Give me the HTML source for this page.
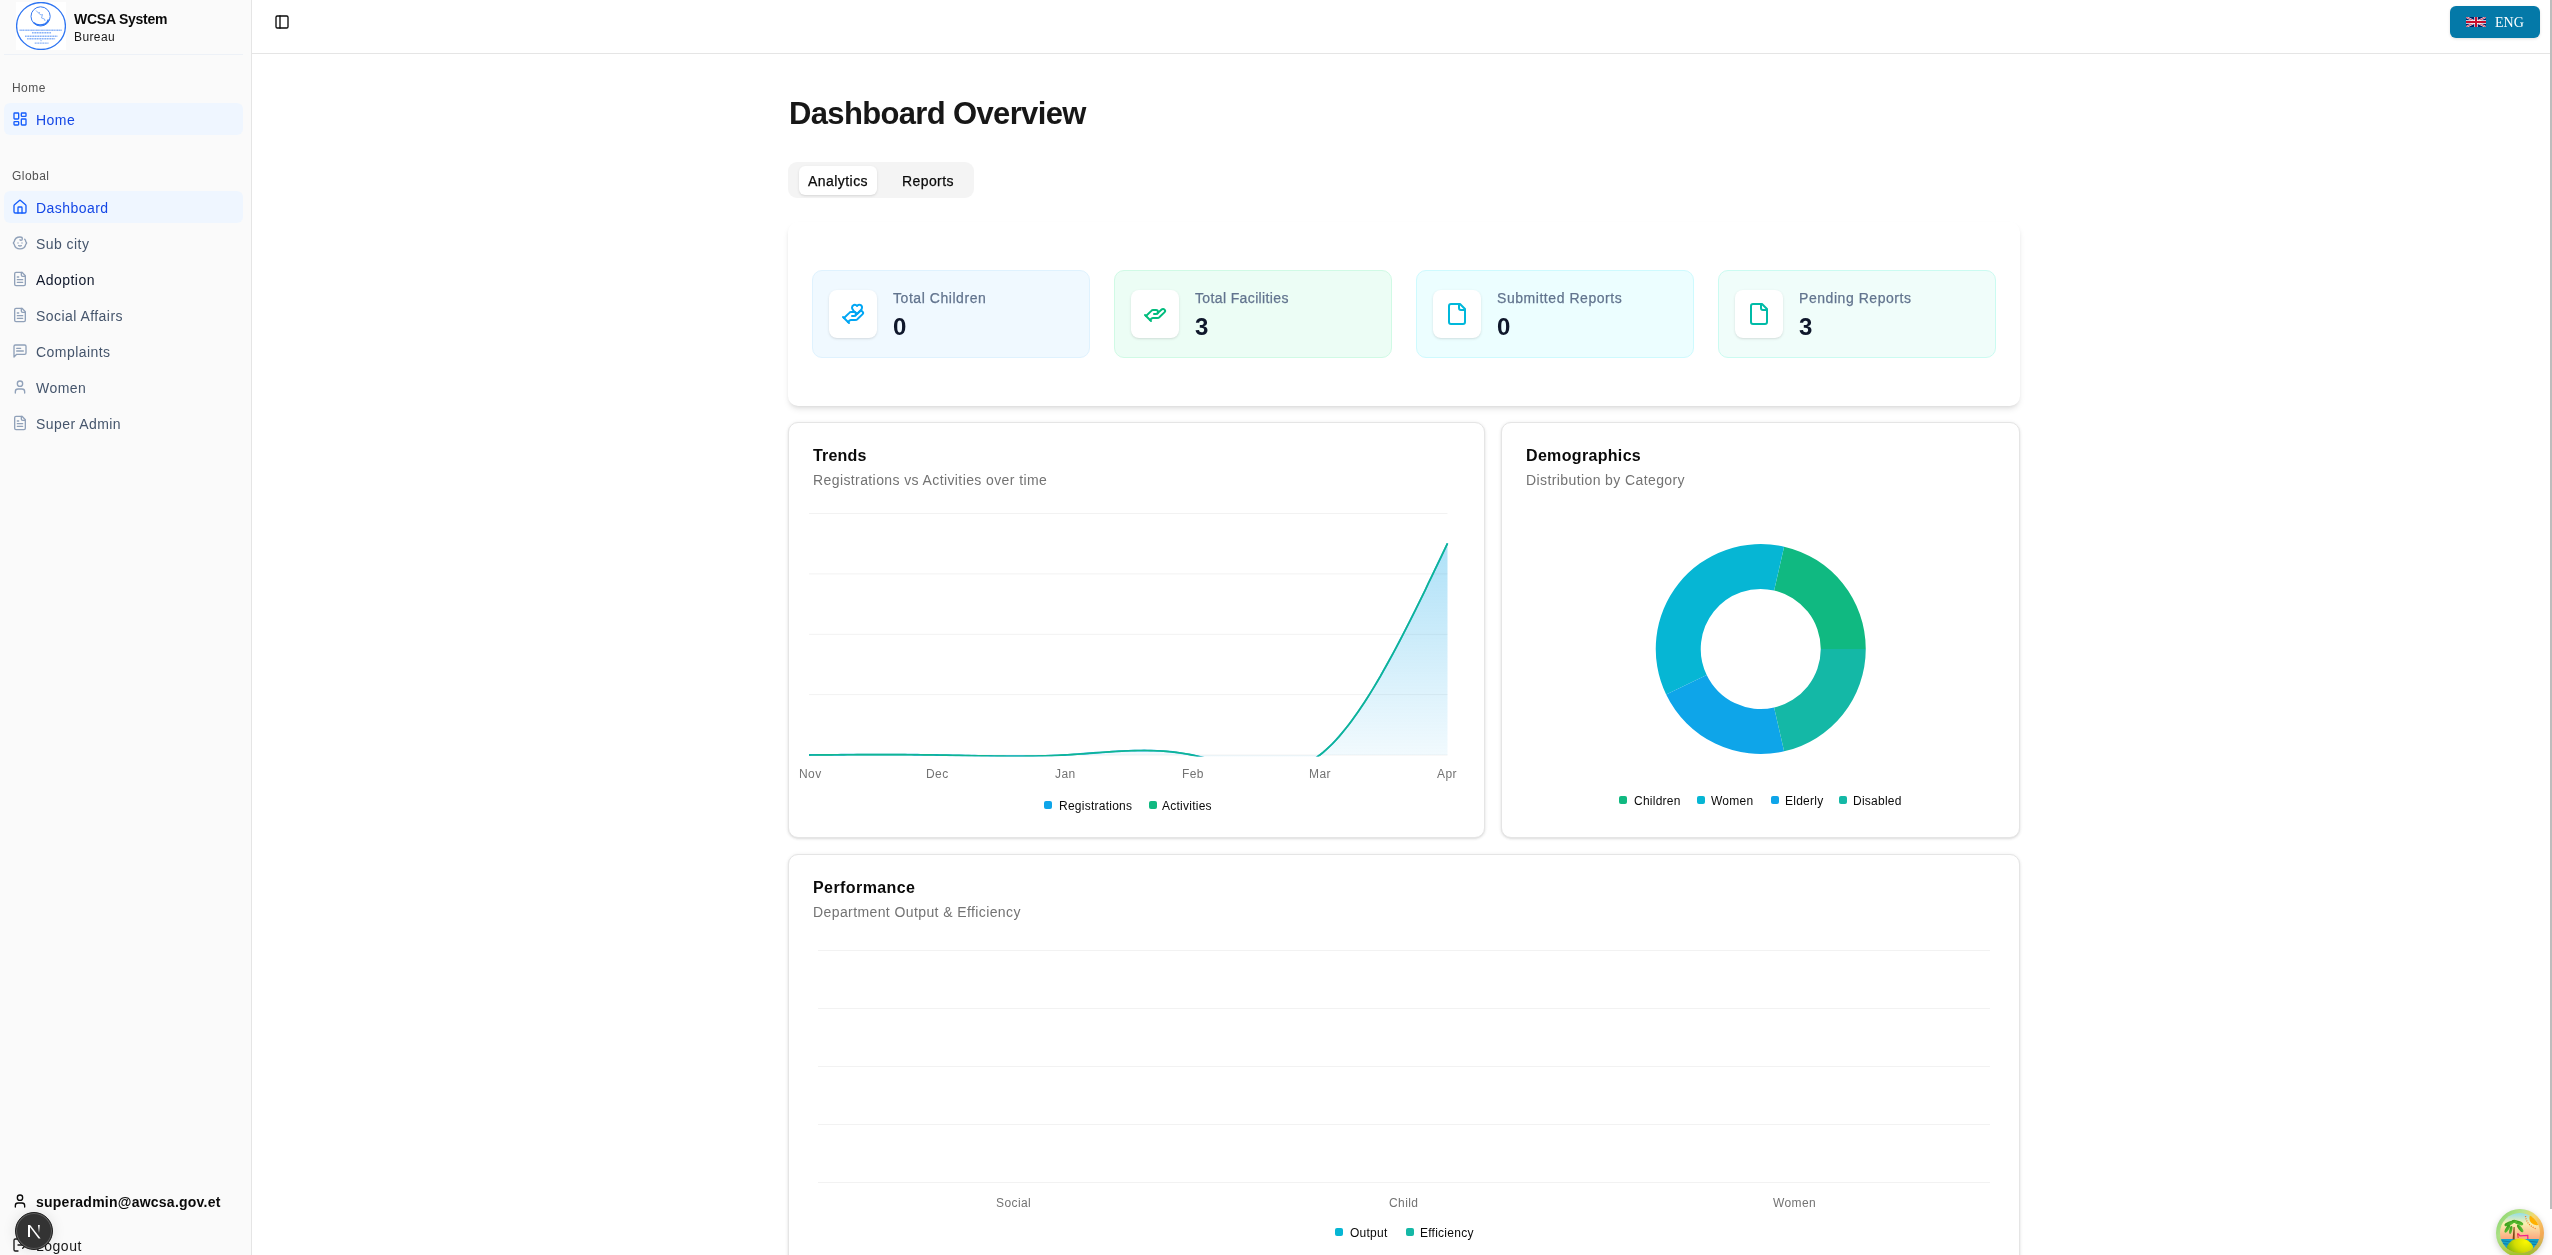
<!DOCTYPE html>
<html><head><meta charset="utf-8">
<style>
*{box-sizing:border-box;margin:0;padding:0}
html,body{width:2552px;height:1255px;overflow:hidden;background:#fff;font-family:"Liberation Sans",sans-serif;color:#0a0a0a}
.abs{position:absolute}
.t,.lbl,.grp,.ctitle,.csub,.leg,.ax,.lb,.val{will-change:transform}
.t{position:absolute;white-space:nowrap;line-height:1}
#sidebar{position:absolute;left:0;top:0;width:252px;height:1255px;background:#fafafa;border-right:1px solid #e5e5e5}
#header{position:absolute;left:252px;top:0;width:2300px;height:54px;border-bottom:1px solid #e5e5e5;background:#fff}
.nav{position:absolute;left:4px;width:239px;height:32px;border-radius:6px}
.nav.active{background:#eff6ff}
.nav svg{position:absolute;left:8px;top:8px;width:16px;height:16px;fill:none;stroke:#90a1b9;stroke-width:2;stroke-linecap:round;stroke-linejoin:round}
.nav.active svg{stroke:#155dfc}
.nav .lbl{position:absolute;left:32px;top:1px;line-height:32px;font-size:14px;letter-spacing:.45px;color:#45556c;white-space:nowrap}
.nav.active .lbl{color:#1447e6}
.grp{position:absolute;left:12px;font-size:12px;letter-spacing:.45px;color:#525252;line-height:12px;white-space:nowrap}
.card{position:absolute;background:#fff;border:1px solid #e5e5e5;border-radius:10px;box-shadow:0 1px 3px 0 rgba(0,0,0,.1),0 1px 2px -1px rgba(0,0,0,.1),0 0 5px rgba(0,0,0,.035)}
.stat{position:absolute;top:270px;width:278px;height:88px;border-radius:10px;border:1px solid}
.stat .ib{position:absolute;left:16px;top:19px;width:48px;height:48px;border-radius:8px;background:#fff;box-shadow:0 1px 3px rgba(0,0,0,.1),0 1px 2px -1px rgba(0,0,0,.1)}
.stat .ib svg{position:absolute;left:12px;top:12px;width:24px;height:24px;fill:none;stroke-width:2;stroke-linecap:round;stroke-linejoin:round}
.stat .lb{position:absolute;left:80px;top:20px;font-size:14px;line-height:14px;letter-spacing:.55px;-webkit-text-stroke:.25px currentColor;color:#62748e;white-space:nowrap}
.stat .val{position:absolute;left:80px;top:44px;font-size:24px;line-height:24px;font-weight:bold;color:#0f172b}
.ctitle{position:absolute;font-size:16px;font-weight:bold;line-height:16px;margin-top:1px;letter-spacing:.2px;color:#0a0a0a;white-space:nowrap}
.csub{position:absolute;font-size:14px;line-height:14px;letter-spacing:.4px;color:#737373;white-space:nowrap}
.leg{position:absolute;font-size:12px;line-height:12px;letter-spacing:.25px;color:#0a0a0a;white-space:nowrap}
.sq{position:absolute;width:8px;height:8px;border-radius:2px}
.ax{position:absolute;font-size:12px;line-height:12px;letter-spacing:.4px;color:#737373;white-space:nowrap}
</style></head>
<body>
<!-- SIDEBAR -->
<div id="sidebar">
  <!-- logo -->
  <div class="abs" style="left:16px;top:2px;width:50px;height:48px;background:#fff">
    <svg width="50" height="48" viewBox="0 0 50 48" style="position:absolute;left:0;top:0">
      <ellipse cx="25" cy="24" rx="24.4" ry="23.5" fill="none" stroke="#2d74f2" stroke-width="1.3"/>
      <circle cx="24.6" cy="14.4" r="9.6" fill="none" stroke="#3579f2" stroke-width="1"/>
      <path d="M17.5 20.5 Q22 24.5 29 22 Q31.5 20.5 32.5 17.5" fill="none" stroke="#2d74f2" stroke-width="1.5"/>
      <path d="M20 8.5 L22.5 11 L24 10.5 M22.5 11 L25 13 L26.5 12.5 L25.5 16 L28.5 17 L29 19" fill="none" stroke="#6fa2f6" stroke-width=".8"/>
      <g stroke="#5a94f5" stroke-dasharray="1.3 .35 .9 .3 1.6 .5" opacity=".7">
        <line x1="3.5" y1="28.35" x2="46" y2="28.35" stroke-width="1.5"/>
        <line x1="16" y1="30.8" x2="35" y2="30.8" stroke-width="1.4"/>
        <line x1="9" y1="34.2" x2="41.7" y2="34.2" stroke-width="1.4"/>
        <line x1="11.1" y1="36.7" x2="39.1" y2="36.7" stroke-width="1.4"/>
        <line x1="24.4" y1="38.7" x2="26" y2="38.7" stroke-width="1"/>
        <line x1="18.7" y1="41.1" x2="32.5" y2="41.1" stroke-width="1.4"/>
      </g>
    </svg>
  </div>
  <div class="t" style="left:74px;top:12px;font-size:14px;font-weight:bold;color:#0a0a0a;letter-spacing:-.25px">WCSA System</div>
  <div class="t" style="left:74px;top:31px;font-size:12px;color:#171717;letter-spacing:.4px">Bureau</div>
  <div class="abs" style="left:4px;top:54px;width:239px;height:1px;background:#edf1f7"></div>

  <div class="grp" style="top:82px">Home</div>
  <div class="nav active" style="top:103px">
    <svg viewBox="0 0 24 24"><rect width="7" height="9" x="3" y="3" rx="1"/><rect width="7" height="5" x="14" y="3" rx="1"/><rect width="7" height="9" x="14" y="12" rx="1"/><rect width="7" height="5" x="3" y="16" rx="1"/></svg>
    <div class="lbl">Home</div>
  </div>

  <div class="grp" style="top:170px">Global</div>
  <div class="nav active" style="top:191px">
    <svg viewBox="0 0 24 24"><path d="M15 21v-8a1 1 0 0 0-1-1h-4a1 1 0 0 0-1 1v8"/><path d="M3 10a2 2 0 0 1 .709-1.528l7-5.999a2 2 0 0 1 2.582 0l7 5.999A2 2 0 0 1 21 10v9a2 2 0 0 1-2 2H5a2 2 0 0 1-2-2z"/></svg>
    <div class="lbl">Dashboard</div>
  </div>
  <div class="nav" style="top:227px">
    <svg viewBox="0 0 24 24"><path d="M9 12h.01"/><path d="M15 12h.01"/><path d="M10 16c.5.3 1.2.5 2 .5s1.5-.2 2-.5"/><path d="M19 6.3a9 9 0 0 1 1.8 3.9 2 2 0 0 1 0 3.6 9 9 0 0 1-17.6 0 2 2 0 0 1 0-3.6A9 9 0 0 1 12 3c2 0 3.5 1.1 3.5 2.5s-.9 2.5-2 2.5c-.8 0-1.5-.4-1.5-1"/></svg>
    <div class="lbl">Sub city</div>
  </div>
  <div class="nav" style="top:263px">
    <svg viewBox="0 0 24 24"><path d="M15 2H6a2 2 0 0 0-2 2v16a2 2 0 0 0 2 2h12a2 2 0 0 0 2-2V7Z"/><path d="M14 2v4a2 2 0 0 0 2 2h4"/><path d="M10 9H8"/><path d="M16 13H8"/><path d="M16 17H8"/></svg>
    <div class="lbl" style="color:#0f172b">Adoption</div>
  </div>
  <div class="nav" style="top:299px">
    <svg viewBox="0 0 24 24"><path d="M15 2H6a2 2 0 0 0-2 2v16a2 2 0 0 0 2 2h12a2 2 0 0 0 2-2V7Z"/><path d="M14 2v4a2 2 0 0 0 2 2h4"/><path d="M10 9H8"/><path d="M16 13H8"/><path d="M16 17H8"/></svg>
    <div class="lbl">Social Affairs</div>
  </div>
  <div class="nav" style="top:335px">
    <svg viewBox="0 0 24 24"><path d="M21 15a2 2 0 0 1-2 2H7l-4 4V5a2 2 0 0 1 2-2h14a2 2 0 0 1 2 2z"/><path d="M13 8H7"/><path d="M17 12H7"/></svg>
    <div class="lbl">Complaints</div>
  </div>
  <div class="nav" style="top:371px">
    <svg viewBox="0 0 24 24"><path d="M19 21v-2a4 4 0 0 0-4-4H9a4 4 0 0 0-4 4v2"/><circle cx="12" cy="7" r="4"/></svg>
    <div class="lbl">Women</div>
  </div>
  <div class="nav" style="top:407px">
    <svg viewBox="0 0 24 24"><path d="M15 2H6a2 2 0 0 0-2 2v16a2 2 0 0 0 2 2h12a2 2 0 0 0 2-2V7Z"/><path d="M14 2v4a2 2 0 0 0 2 2h4"/><path d="M10 9H8"/><path d="M16 13H8"/><path d="M16 17H8"/></svg>
    <div class="lbl">Super Admin</div>
  </div>

  <!-- bottom user -->
  <svg class="abs" style="left:12px;top:1193px;width:16px;height:16px" viewBox="0 0 24 24" fill="none" stroke="#0a0a0a" stroke-width="2" stroke-linecap="round" stroke-linejoin="round"><path d="M19 21v-2a4 4 0 0 0-4-4H9a4 4 0 0 0-4 4v2"/><circle cx="12" cy="7" r="4"/></svg>
  <div class="t" style="left:36px;top:1195px;font-size:14px;font-weight:bold;color:#0a0a0a;letter-spacing:.24px">superadmin@awcsa.gov.et</div>
  <svg class="abs" style="left:12px;top:1237px;width:16px;height:16px" viewBox="0 0 24 24" fill="none" stroke="#171717" stroke-width="2" stroke-linecap="round" stroke-linejoin="round"><path d="M9 21H5a2 2 0 0 1-2-2V5a2 2 0 0 1 2-2h4"/><polyline points="16 17 21 12 16 7"/><line x1="21" x2="9" y1="12" y2="12"/></svg>
  <div class="t" style="left:36px;top:1239px;font-size:14px;color:#171717;letter-spacing:.5px">Logout</div>
  <!-- N badge -->
  <div class="abs" style="left:15px;top:1212px;width:38px;height:38px;border-radius:50%;background:#333;border:1px solid #1e1e1e;box-shadow:inset 0 0 0 1px #5e5e5e,0 0 14px rgba(0,0,0,.10)">
    <svg width="36" height="36" viewBox="0 0 36 36" style="position:absolute;left:0;top:0">
      <defs><linearGradient id="nfade" x1="0" y1="0" x2="0" y2="1"><stop offset="0" stop-color="#fff"/><stop offset="1" stop-color="#fff" stop-opacity="0"/></linearGradient></defs>
      <rect x="12" y="12" width="2" height="12" fill="#fff"/>
      <path d="M12.6 12.2 L14.4 12.2 L24.6 25.6 L22.6 25.6 Z" fill="#fff"/>
      <rect x="22" y="12" width="1.8" height="8" fill="url(#nfade)"/>
    </svg>
  </div>
</div>
</div>
<!-- HEADER -->
<div id="header">
  <svg class="abs" style="left:22px;top:14px;width:16px;height:16px" viewBox="0 0 24 24" fill="none" stroke="#0a0a0a" stroke-width="2" stroke-linecap="round" stroke-linejoin="round"><rect width="18" height="18" x="3" y="3" rx="2"/><path d="M9 3v18"/></svg>
</div>
<!-- ENG button -->
<div class="abs" style="left:2450px;top:6px;width:90px;height:32px;border-radius:6px;background:#0479a8;box-shadow:0 1px 3px rgba(0,0,0,.12)">
  <svg class="abs" style="left:16px;top:11px" width="20" height="10" viewBox="0 0 60 30">
    <rect width="60" height="30" fill="#012169"/>
    <path d="M0,0 L60,30 M60,0 L0,30" stroke="#fff" stroke-width="6"/>
    <path d="M0,0 L60,30 M60,0 L0,30" stroke="#C8102E" stroke-width="2.5"/>
    <path d="M30,0 V30 M0,15 H60" stroke="#fff" stroke-width="10"/>
    <path d="M30,0 V30 M0,15 H60" stroke="#C8102E" stroke-width="6"/>
  </svg>
  <div class="t" style="left:45px;top:10px;font-family:'Liberation Serif',serif;font-size:14px;color:#fff">ENG</div>
</div>
<!-- scrollbar thumb -->
<div class="abs" style="left:2550px;top:0;width:2px;height:1209px;background:#bdbdbd"></div>
<!-- MAIN -->
<div id="main">
  <div class="t" style="left:789px;top:98px;font-size:31px;font-weight:bold;color:#171717;letter-spacing:-.65px">Dashboard Overview</div>
  <!-- tabs -->
  <div class="abs" style="left:788px;top:162px;width:186px;height:36px;border-radius:9px;background:#f4f4f4"></div>
  <div class="abs" style="left:799px;top:166px;width:78px;height:29px;border-radius:6px;background:#fff;box-shadow:0 1px 3px rgba(0,0,0,.1),0 1px 2px -1px rgba(0,0,0,.1)"></div>
  <div class="t" style="left:808px;top:174px;font-size:14px;color:#0a0a0a;letter-spacing:.45px;-webkit-text-stroke:.25px currentColor">Analytics</div>
  <div class="t" style="left:902px;top:174px;font-size:14px;color:#0a0a0a;letter-spacing:.4px;-webkit-text-stroke:.25px currentColor">Reports</div>

  <!-- stats card -->
  <div class="abs" style="left:788px;top:222px;width:1232px;height:184px;border-radius:10px;background:#fff;box-shadow:0 4px 6px -1px rgba(0,0,0,.1),0 2px 4px -2px rgba(0,0,0,.1)"></div>
  <div class="stat" style="left:812px;background:#f0f9ff;border-color:#dff2fe">
    <div class="ib"><svg viewBox="0 0 24 24" stroke="#00a6f4"><path d="M11 14h2a2 2 0 1 0 0-4h-3c-.6 0-1.1.2-1.4.6L3 16"/><path d="m7 20 1.6-1.4c.3-.4.8-.6 1.4-.6h4c1.1 0 2.1-.4 2.8-1.2l4.6-4.4a2 2 0 0 0-2.75-2.91l-4.2 3.9"/><path d="m2 15 6 6"/><path d="M19.5 8.5c.7-.7 1.5-1.6 1.5-2.7A2.73 2.73 0 0 0 16 4a2.78 2.78 0 0 0-5 1.8c0 1.2.8 2 1.5 2.8L16 12Z"/></svg></div>
    <div class="lb">Total Children</div>
    <div class="val">0</div>
  </div>
  <div class="stat" style="left:1114px;background:#ecfdf5;border-color:#d0fae5">
    <div class="ib"><svg viewBox="0 0 24 24" stroke="#00bc7d"><path d="M11 12h2a2 2 0 1 0 0-4h-3c-.6 0-1.1.2-1.4.6L3 14"/><path d="m7 18 1.6-1.4c.3-.4.8-.6 1.4-.6h4c1.1 0 2.1-.4 2.8-1.2l4.6-4.4a2 2 0 0 0-2.75-2.91l-4.2 3.9"/><path d="m2 13 6 6"/></svg></div>
    <div class="lb" style="letter-spacing:.37px">Total Facilities</div>
    <div class="val">3</div>
  </div>
  <div class="stat" style="left:1416px;background:#ecfeff;border-color:#cefafe">
    <div class="ib"><svg viewBox="0 0 24 24" stroke="#00b8db"><path d="M15 2H6a2 2 0 0 0-2 2v16a2 2 0 0 0 2 2h12a2 2 0 0 0 2-2V7Z"/><path d="M14 2v4a2 2 0 0 0 2 2h4"/></svg></div>
    <div class="lb">Submitted Reports</div>
    <div class="val">0</div>
  </div>
  <div class="stat" style="left:1718px;background:#f0fdfa;border-color:#cbfbf1">
    <div class="ib"><svg viewBox="0 0 24 24" stroke="#00bba7"><path d="M15 2H6a2 2 0 0 0-2 2v16a2 2 0 0 0 2 2h12a2 2 0 0 0 2-2V7Z"/><path d="M14 2v4a2 2 0 0 0 2 2h4"/></svg></div>
    <div class="lb">Pending Reports</div>
    <div class="val">3</div>
  </div>

  <!-- trends card -->
  <div class="card" style="left:788px;top:422px;width:697px;height:416px"></div>
  <div class="ctitle" style="left:813px;top:447px">Trends</div>
  <div class="csub" style="left:813px;top:473px">Registrations vs Activities over time</div>
  <svg class="abs" style="left:788px;top:422px" width="697" height="416" viewBox="788 422 697 416">
    <defs>
      <linearGradient id="gReg" x1="0" y1="0" x2="0" y2="1">
        <stop offset="5%" stop-color="#0ea5e9" stop-opacity="0.32"/>
        <stop offset="95%" stop-color="#0ea5e9" stop-opacity="0.05"/>
      </linearGradient>
      <clipPath id="plot"><rect x="805" y="500" width="650" height="256.6"/></clipPath>
    </defs>
    <g stroke="#f2f2f2" stroke-width="1">
      <line x1="809" y1="513.5" x2="1447.5" y2="513.5"/>
      <line x1="809" y1="573.9" x2="1447.5" y2="573.9"/>
      <line x1="809" y1="634.3" x2="1447.5" y2="634.3"/>
      <line x1="809" y1="694.6" x2="1447.5" y2="694.6"/>
      <line x1="809" y1="755" x2="1447.5" y2="755"/>
    </g>
    <g clip-path="url(#plot)">
      <path d="M809.0 755.00 L812.2 754.97 L815.4 754.95 L818.6 754.92 L821.8 754.90 L825.0 754.88 L828.2 754.85 L831.3 754.83 L834.5 754.81 L837.7 754.78 L840.9 754.76 L844.1 754.74 L847.3 754.72 L850.5 754.71 L853.7 754.69 L856.9 754.67 L860.1 754.66 L863.3 754.65 L866.5 754.64 L869.7 754.63 L872.9 754.62 L876.0 754.61 L879.2 754.61 L882.4 754.61 L885.6 754.61 L888.8 754.61 L892.0 754.62 L895.2 754.63 L898.4 754.64 L901.6 754.65 L904.8 754.67 L908.0 754.69 L911.2 754.71 L914.4 754.73 L917.5 754.76 L920.7 754.79 L923.9 754.83 L927.1 754.86 L930.3 754.91 L933.5 754.95 L936.7 755.00 L939.9 755.05 L943.1 755.11 L946.3 755.17 L949.5 755.23 L952.7 755.29 L955.9 755.35 L959.0 755.42 L962.2 755.49 L965.4 755.55 L968.6 755.62 L971.8 755.68 L975.0 755.74 L978.2 755.81 L981.4 755.86 L984.6 755.92 L987.8 755.97 L991.0 756.02 L994.2 756.06 L997.4 756.10 L1000.6 756.14 L1003.7 756.17 L1006.9 756.19 L1010.1 756.21 L1013.3 756.21 L1016.5 756.22 L1019.7 756.21 L1022.9 756.19 L1026.1 756.17 L1029.3 756.14 L1032.5 756.09 L1035.7 756.04 L1038.9 755.97 L1042.1 755.90 L1045.2 755.81 L1048.4 755.71 L1051.6 755.59 L1054.8 755.47 L1058.0 755.32 L1061.2 755.17 L1064.4 755.00 L1067.6 754.82 L1070.8 754.62 L1074.0 754.41 L1077.2 754.19 L1080.4 753.96 L1083.6 753.73 L1086.7 753.49 L1089.9 753.25 L1093.1 753.01 L1096.3 752.77 L1099.5 752.53 L1102.7 752.30 L1105.9 752.07 L1109.1 751.86 L1112.3 751.65 L1115.5 751.45 L1118.7 751.27 L1121.9 751.10 L1125.1 750.95 L1128.2 750.82 L1131.4 750.71 L1134.6 750.63 L1137.8 750.57 L1141.0 750.53 L1144.2 750.52 L1147.4 750.54 L1150.6 750.60 L1153.8 750.68 L1157.0 750.81 L1160.2 750.97 L1163.4 751.16 L1166.6 751.40 L1169.8 751.69 L1172.9 752.01 L1176.1 752.38 L1179.3 752.80 L1182.5 753.27 L1185.7 753.80 L1188.9 754.37 L1192.1 755.00 L1195.3 755.69 L1198.5 756.42 L1201.7 757.20 L1204.9 758.02 L1208.1 758.86 L1211.3 759.73 L1214.4 760.62 L1217.6 761.51 L1220.8 762.41 L1224.0 763.31 L1227.2 764.19 L1230.4 765.06 L1233.6 765.90 L1236.8 766.71 L1240.0 767.49 L1243.2 768.22 L1246.4 768.90 L1249.6 769.52 L1252.8 770.08 L1255.9 770.57 L1259.1 770.98 L1262.3 771.30 L1265.5 771.53 L1268.7 771.67 L1271.9 771.70 L1275.1 771.62 L1278.3 771.42 L1281.5 771.09 L1284.7 770.64 L1287.9 770.04 L1291.1 769.30 L1294.3 768.41 L1297.5 767.36 L1300.6 766.15 L1303.8 764.76 L1307.0 763.19 L1310.2 761.44 L1313.4 759.49 L1316.6 757.35 L1319.8 755.00 L1323.0 752.44 L1326.2 749.67 L1329.4 746.70 L1332.6 743.54 L1335.8 740.18 L1339.0 736.63 L1342.1 732.91 L1345.3 729.01 L1348.5 724.94 L1351.7 720.70 L1354.9 716.31 L1358.1 711.76 L1361.3 707.06 L1364.5 702.22 L1367.7 697.24 L1370.9 692.13 L1374.1 686.89 L1377.3 681.53 L1380.5 676.05 L1383.6 670.46 L1386.8 664.76 L1390.0 658.97 L1393.2 653.07 L1396.4 647.09 L1399.6 641.02 L1402.8 634.87 L1406.0 628.65 L1409.2 622.36 L1412.4 616.00 L1415.6 609.59 L1418.8 603.12 L1422.0 596.61 L1425.2 590.05 L1428.3 583.45 L1431.5 576.83 L1434.7 570.17 L1437.9 563.50 L1441.1 556.81 L1444.3 550.11 L1447.5 543.40 L1447.5 755.0 L809.0 755.0 Z" fill="url(#gReg)"/>
      <path d="M809.0 755.00 L812.2 754.97 L815.4 754.95 L818.6 754.92 L821.8 754.90 L825.0 754.88 L828.2 754.85 L831.3 754.83 L834.5 754.81 L837.7 754.78 L840.9 754.76 L844.1 754.74 L847.3 754.72 L850.5 754.71 L853.7 754.69 L856.9 754.67 L860.1 754.66 L863.3 754.65 L866.5 754.64 L869.7 754.63 L872.9 754.62 L876.0 754.61 L879.2 754.61 L882.4 754.61 L885.6 754.61 L888.8 754.61 L892.0 754.62 L895.2 754.63 L898.4 754.64 L901.6 754.65 L904.8 754.67 L908.0 754.69 L911.2 754.71 L914.4 754.73 L917.5 754.76 L920.7 754.79 L923.9 754.83 L927.1 754.86 L930.3 754.91 L933.5 754.95 L936.7 755.00 L939.9 755.05 L943.1 755.11 L946.3 755.17 L949.5 755.23 L952.7 755.29 L955.9 755.35 L959.0 755.42 L962.2 755.49 L965.4 755.55 L968.6 755.62 L971.8 755.68 L975.0 755.74 L978.2 755.81 L981.4 755.86 L984.6 755.92 L987.8 755.97 L991.0 756.02 L994.2 756.06 L997.4 756.10 L1000.6 756.14 L1003.7 756.17 L1006.9 756.19 L1010.1 756.21 L1013.3 756.21 L1016.5 756.22 L1019.7 756.21 L1022.9 756.19 L1026.1 756.17 L1029.3 756.14 L1032.5 756.09 L1035.7 756.04 L1038.9 755.97 L1042.1 755.90 L1045.2 755.81 L1048.4 755.71 L1051.6 755.59 L1054.8 755.47 L1058.0 755.32 L1061.2 755.17 L1064.4 755.00 L1067.6 754.82 L1070.8 754.62 L1074.0 754.41 L1077.2 754.19 L1080.4 753.96 L1083.6 753.73 L1086.7 753.49 L1089.9 753.25 L1093.1 753.01 L1096.3 752.77 L1099.5 752.53 L1102.7 752.30 L1105.9 752.07 L1109.1 751.86 L1112.3 751.65 L1115.5 751.45 L1118.7 751.27 L1121.9 751.10 L1125.1 750.95 L1128.2 750.82 L1131.4 750.71 L1134.6 750.63 L1137.8 750.57 L1141.0 750.53 L1144.2 750.52 L1147.4 750.54 L1150.6 750.60 L1153.8 750.68 L1157.0 750.81 L1160.2 750.97 L1163.4 751.16 L1166.6 751.40 L1169.8 751.69 L1172.9 752.01 L1176.1 752.38 L1179.3 752.80 L1182.5 753.27 L1185.7 753.80 L1188.9 754.37 L1192.1 755.00 L1195.3 755.69 L1198.5 756.42 L1201.7 757.20 L1204.9 758.02 L1208.1 758.86 L1211.3 759.73 L1214.4 760.62 L1217.6 761.51 L1220.8 762.41 L1224.0 763.31 L1227.2 764.19 L1230.4 765.06 L1233.6 765.90 L1236.8 766.71 L1240.0 767.49 L1243.2 768.22 L1246.4 768.90 L1249.6 769.52 L1252.8 770.08 L1255.9 770.57 L1259.1 770.98 L1262.3 771.30 L1265.5 771.53 L1268.7 771.67 L1271.9 771.70 L1275.1 771.62 L1278.3 771.42 L1281.5 771.09 L1284.7 770.64 L1287.9 770.04 L1291.1 769.30 L1294.3 768.41 L1297.5 767.36 L1300.6 766.15 L1303.8 764.76 L1307.0 763.19 L1310.2 761.44 L1313.4 759.49 L1316.6 757.35 L1319.8 755.00 L1323.0 752.44 L1326.2 749.67 L1329.4 746.70 L1332.6 743.54 L1335.8 740.18 L1339.0 736.63 L1342.1 732.91 L1345.3 729.01 L1348.5 724.94 L1351.7 720.70 L1354.9 716.31 L1358.1 711.76 L1361.3 707.06 L1364.5 702.22 L1367.7 697.24 L1370.9 692.13 L1374.1 686.89 L1377.3 681.53 L1380.5 676.05 L1383.6 670.46 L1386.8 664.76 L1390.0 658.97 L1393.2 653.07 L1396.4 647.09 L1399.6 641.02 L1402.8 634.87 L1406.0 628.65 L1409.2 622.36 L1412.4 616.00 L1415.6 609.59 L1418.8 603.12 L1422.0 596.61 L1425.2 590.05 L1428.3 583.45 L1431.5 576.83 L1434.7 570.17 L1437.9 563.50 L1441.1 556.81 L1444.3 550.11 L1447.5 543.40" fill="none" stroke="#0ea5e9" stroke-width="1.8"/>
      <path d="M809.0 755.00 L812.2 754.97 L815.4 754.95 L818.6 754.92 L821.8 754.90 L825.0 754.88 L828.2 754.85 L831.3 754.83 L834.5 754.81 L837.7 754.78 L840.9 754.76 L844.1 754.74 L847.3 754.72 L850.5 754.71 L853.7 754.69 L856.9 754.67 L860.1 754.66 L863.3 754.65 L866.5 754.64 L869.7 754.63 L872.9 754.62 L876.0 754.61 L879.2 754.61 L882.4 754.61 L885.6 754.61 L888.8 754.61 L892.0 754.62 L895.2 754.63 L898.4 754.64 L901.6 754.65 L904.8 754.67 L908.0 754.69 L911.2 754.71 L914.4 754.73 L917.5 754.76 L920.7 754.79 L923.9 754.83 L927.1 754.86 L930.3 754.91 L933.5 754.95 L936.7 755.00 L939.9 755.05 L943.1 755.11 L946.3 755.17 L949.5 755.23 L952.7 755.29 L955.9 755.35 L959.0 755.42 L962.2 755.49 L965.4 755.55 L968.6 755.62 L971.8 755.68 L975.0 755.74 L978.2 755.81 L981.4 755.86 L984.6 755.92 L987.8 755.97 L991.0 756.02 L994.2 756.06 L997.4 756.10 L1000.6 756.14 L1003.7 756.17 L1006.9 756.19 L1010.1 756.21 L1013.3 756.21 L1016.5 756.22 L1019.7 756.21 L1022.9 756.19 L1026.1 756.17 L1029.3 756.14 L1032.5 756.09 L1035.7 756.04 L1038.9 755.97 L1042.1 755.90 L1045.2 755.81 L1048.4 755.71 L1051.6 755.59 L1054.8 755.47 L1058.0 755.32 L1061.2 755.17 L1064.4 755.00 L1067.6 754.82 L1070.8 754.62 L1074.0 754.41 L1077.2 754.19 L1080.4 753.96 L1083.6 753.73 L1086.7 753.49 L1089.9 753.25 L1093.1 753.01 L1096.3 752.77 L1099.5 752.53 L1102.7 752.30 L1105.9 752.07 L1109.1 751.86 L1112.3 751.65 L1115.5 751.45 L1118.7 751.27 L1121.9 751.10 L1125.1 750.95 L1128.2 750.82 L1131.4 750.71 L1134.6 750.63 L1137.8 750.57 L1141.0 750.53 L1144.2 750.52 L1147.4 750.54 L1150.6 750.60 L1153.8 750.68 L1157.0 750.81 L1160.2 750.97 L1163.4 751.16 L1166.6 751.40 L1169.8 751.69 L1172.9 752.01 L1176.1 752.38 L1179.3 752.80 L1182.5 753.27 L1185.7 753.80 L1188.9 754.37 L1192.1 755.00 L1195.3 755.69 L1198.5 756.42 L1201.7 757.20 L1204.9 758.02 L1208.1 758.86 L1211.3 759.73 L1214.4 760.62 L1217.6 761.51 L1220.8 762.41 L1224.0 763.31 L1227.2 764.19 L1230.4 765.06 L1233.6 765.90 L1236.8 766.71 L1240.0 767.49 L1243.2 768.22 L1246.4 768.90 L1249.6 769.52 L1252.8 770.08 L1255.9 770.57 L1259.1 770.98 L1262.3 771.30 L1265.5 771.53 L1268.7 771.67 L1271.9 771.70 L1275.1 771.62 L1278.3 771.42 L1281.5 771.09 L1284.7 770.64 L1287.9 770.04 L1291.1 769.30 L1294.3 768.41 L1297.5 767.36 L1300.6 766.15 L1303.8 764.76 L1307.0 763.19 L1310.2 761.44 L1313.4 759.49 L1316.6 757.35 L1319.8 755.00 L1323.0 752.44 L1326.2 749.67 L1329.4 746.70 L1332.6 743.54 L1335.8 740.18 L1339.0 736.63 L1342.1 732.91 L1345.3 729.01 L1348.5 724.94 L1351.7 720.70 L1354.9 716.31 L1358.1 711.76 L1361.3 707.06 L1364.5 702.22 L1367.7 697.24 L1370.9 692.13 L1374.1 686.89 L1377.3 681.53 L1380.5 676.05 L1383.6 670.46 L1386.8 664.76 L1390.0 658.97 L1393.2 653.07 L1396.4 647.09 L1399.6 641.02 L1402.8 634.87 L1406.0 628.65 L1409.2 622.36 L1412.4 616.00 L1415.6 609.59 L1418.8 603.12 L1422.0 596.61 L1425.2 590.05 L1428.3 583.45 L1431.5 576.83 L1434.7 570.17 L1437.9 563.50 L1441.1 556.81 L1444.3 550.11 L1447.5 543.40" fill="none" stroke="#10b981" stroke-width="1.6" opacity=".85"/>
    </g>
  </svg>
  <div class="ax" style="left:799px;top:768px">Nov</div>
  <div class="ax" style="left:926px;top:768px">Dec</div>
  <div class="ax" style="left:1055px;top:768px">Jan</div>
  <div class="ax" style="left:1182px;top:768px">Feb</div>
  <div class="ax" style="left:1309px;top:768px">Mar</div>
  <div class="ax" style="left:1437px;top:768px">Apr</div>
  <div class="sq" style="left:1044px;top:801px;background:#0ea5e9"></div>
  <div class="leg" style="left:1059px;top:800px">Registrations</div>
  <div class="sq" style="left:1149px;top:801px;background:#10b981"></div>
  <div class="leg" style="left:1162px;top:800px">Activities</div>

  <!-- demographics card -->
  <div class="card" style="left:1501px;top:422px;width:519px;height:416px"></div>
  <div class="ctitle" style="left:1526px;top:447px;letter-spacing:.33px">Demographics</div>
  <div class="csub" style="left:1526px;top:473px">Distribution by Category</div>
  <svg class="abs" style="left:1640px;top:528px" width="242" height="242" viewBox="1640 528 242 242" id="donut"><path d="M1865.75 649.00 A105 105 0 0 0 1784.11 546.63 L1774.10 590.50 A60 60 0 0 1 1820.75 649.00 Z" fill="#10b981"/><path d="M1784.11 546.63 A105 105 0 0 0 1666.15 694.56 L1706.69 675.03 A60 60 0 0 1 1774.10 590.50 Z" fill="#06b6d4"/><path d="M1666.15 694.56 A105 105 0 0 0 1784.11 751.37 L1774.10 707.50 A60 60 0 0 1 1706.69 675.03 Z" fill="#0ea5e9"/><path d="M1784.11 751.37 A105 105 0 0 0 1865.75 649.00 L1820.75 649.00 A60 60 0 0 1 1774.10 707.50 Z" fill="#14b8a6"/></svg>
  <div class="sq" style="left:1619px;top:796px;background:#10b981"></div>
  <div class="leg" style="left:1634px;top:795px">Children</div>
  <div class="sq" style="left:1697px;top:796px;background:#06b6d4"></div>
  <div class="leg" style="left:1711px;top:795px">Women</div>
  <div class="sq" style="left:1771px;top:796px;background:#0ea5e9"></div>
  <div class="leg" style="left:1785px;top:795px">Elderly</div>
  <div class="sq" style="left:1839px;top:796px;background:#14b8a6"></div>
  <div class="leg" style="left:1853px;top:795px">Disabled</div>

  <!-- performance card -->
  <div class="card" style="left:788px;top:854px;width:1232px;height:500px"></div>
  <div class="ctitle" style="left:813px;top:879px;letter-spacing:.42px">Performance</div>
  <div class="csub" style="left:813px;top:905px">Department Output &amp; Efficiency</div>
  <svg class="abs" style="left:788px;top:854px" width="1232" height="401" viewBox="788 854 1232 401">
    <g stroke="#f2f2f2" stroke-width="1">
      <line x1="818" y1="950.5" x2="1990" y2="950.5"/>
      <line x1="818" y1="1008.5" x2="1990" y2="1008.5"/>
      <line x1="818" y1="1066.5" x2="1990" y2="1066.5"/>
      <line x1="818" y1="1124.5" x2="1990" y2="1124.5"/>
      <line x1="818" y1="1182.5" x2="1990" y2="1182.5"/>
    </g>
  </svg>
  <div class="ax" style="left:996px;top:1197px">Social</div>
  <div class="ax" style="left:1389px;top:1197px">Child</div>
  <div class="ax" style="left:1773px;top:1197px">Women</div>
  <div class="sq" style="left:1335px;top:1228px;background:#06b6d4"></div>
  <div class="leg" style="left:1350px;top:1227px">Output</div>
  <div class="sq" style="left:1406px;top:1228px;background:#14b8a6"></div>
  <div class="leg" style="left:1420px;top:1227px">Efficiency</div>

  <!-- floating beach icon -->
  <svg class="abs" style="left:2496px;top:1209px;overflow:visible;filter:drop-shadow(0 2px 3px rgba(0,0,0,.18))" width="48" height="48" viewBox="0 0 48 48">
    <defs>
      <linearGradient id="ring" x1="0.1" y1="0" x2="0.9" y2="0.6">
        <stop offset="0" stop-color="#86d46a"/><stop offset=".4" stop-color="#b9e58f"/><stop offset=".65" stop-color="#f7d66a"/><stop offset="1" stop-color="#f3a955"/>
      </linearGradient>
      <linearGradient id="ringb" x1="0" y1="0" x2="0" y2="1">
        <stop offset=".55" stop-color="#7cc94f" stop-opacity="0"/><stop offset="1" stop-color="#8cc31f" stop-opacity=".9"/>
      </linearGradient>
      <linearGradient id="sky" x1="0" y1="0" x2="0" y2="1">
        <stop offset="0" stop-color="#6fd6fb"/><stop offset=".3" stop-color="#f9f1b0"/><stop offset=".6" stop-color="#fcae83"/><stop offset="1" stop-color="#fb8766"/>
      </linearGradient>
      <radialGradient id="hill" cx=".72" cy=".15" r=".95">
        <stop offset="0" stop-color="#fbf700"/><stop offset=".45" stop-color="#d2dc04"/><stop offset="1" stop-color="#4f9c10"/>
      </radialGradient>
      <linearGradient id="leaf" x1="0" y1="0" x2="1" y2="1">
        <stop offset="0" stop-color="#2f9410"/><stop offset="1" stop-color="#66c93e"/>
      </linearGradient>
      <clipPath id="inner"><circle cx="24" cy="24" r="20"/></clipPath>
    </defs>
    <circle cx="24" cy="24" r="24" fill="url(#ring)"/>
    <circle cx="24" cy="24" r="24" fill="url(#ringb)"/>
    <g clip-path="url(#inner)">
      <rect x="0" y="0" width="48" height="48" fill="url(#sky)"/>
      <circle cx="40.5" cy="9" r="7.2" fill="#ffb000"/>
      <path d="M29.5 7 Q30.5 16 40 19.8" fill="none" stroke="#f47c2a" stroke-width="1.3" stroke-dasharray="1 1.3"/>
      <rect x="0" y="30" width="48" height="10" fill="#14a3c9"/>
      <g stroke="#0b6e96" stroke-width=".7" fill="none"><path d="M0 32.6 Q6 31.2 12 32.6 T24 32.6 T36 32.6 T48 32.6"/><path d="M0 35.2 Q6 33.8 12 35.2 T24 35.2 T36 35.2 T48 35.2"/></g>
      <ellipse cx="24" cy="40.5" rx="13.4" ry="11" fill="url(#hill)"/>
      <path d="M16.6 30.2 Q17.2 24 17.6 18 L18.6 18 Q18.8 24 18.6 30.2 Z" fill="#7a4512"/>
      <path d="M21.6 24.5 L24 26.8 L31.8 26.4 L31.8 30" fill="none" stroke="#f0208c" stroke-width="1.2"/>
      <path d="M21.6 24.5 L22.2 29" fill="none" stroke="#e8302a" stroke-width="1"/>
      <g fill="url(#leaf)">
        <ellipse cx="13.2" cy="14.6" rx="5" ry="1.9" transform="rotate(-22 13.2 14.6)"/>
        <ellipse cx="22.5" cy="13.8" rx="5" ry="1.9" transform="rotate(20 22.5 13.8)"/>
        <ellipse cx="11.4" cy="19.6" rx="1.7" ry="4.6" transform="rotate(32 11.4 19.6)"/>
        <ellipse cx="24.2" cy="19.4" rx="1.7" ry="4.6" transform="rotate(-38 24.2 19.4)"/>
        <ellipse cx="18.2" cy="12.4" rx="2.8" ry="1.6"/>
        <ellipse cx="14.8" cy="21" rx="1.4" ry="4" transform="rotate(12 14.8 21)"/>
      </g>
    </g>
  </svg>
</div>
</body></html>
